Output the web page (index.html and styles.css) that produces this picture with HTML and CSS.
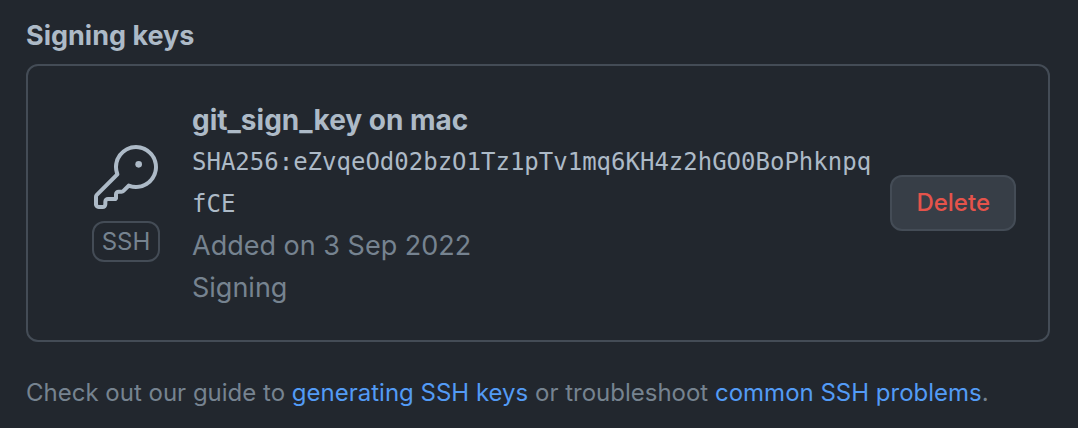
FILE: index.html
```
<!DOCTYPE html>
<html lang="en">
<head>
    <meta charset="UTF-8">
    <meta name="viewport" content="width=device-width, initial-scale=1.0">
    <title>Signing keys</title>
    <link rel="stylesheet" href="styles.css">
</head>
<body>
    <main>
        <h1>Signing keys</h1>

        <ul class="key-list">
            <li class="key">
                <div class="key-type">
                    <svg class="key-icon" viewBox="0 0 24 24" aria-hidden="true">
                        <path d="M16.75 8.5a1.25 1.25 0 100-2.5 1.25 1.25 0 000 2.5z"/>
                        <path fill-rule="evenodd" d="M15.75 0a8.25 8.25 0 00-7.851 10.79L.513 18.178A1.75 1.75 0 000 19.414v2.836C0 23.217.784 24 1.75 24h1.5A1.75 1.75 0 005 22.25v-1a.25.25 0 01.25-.25h2.735a.75.75 0 00.545-.22l.214-.213A.875.875 0 009 19.948V18.5a.25.25 0 01.25-.25h1.086c.464 0 .91-.184 1.237-.513l1.636-1.636A8.25 8.25 0 1015.75 0zM9 8.25a6.75 6.75 0 114.288 6.287.75.75 0 00-.804.168l-1.971 1.972a.25.25 0 01-.177.073H9.25A1.75 1.75 0 007.5 18.5v1H5.25a1.75 1.75 0 00-1.75 1.75v1a.25.25 0 01-.25.25h-1.5a.25.25 0 01-.25-.25v-2.836a.25.25 0 01.073-.177l7.722-7.721a.75.75 0 00.168-.804A6.73 6.73 0 019 8.25z"/>
                    </svg>
                    <span class="label">SSH</span>
                </div>
                <div class="key-info">
                    <strong>git_sign_key on mac</strong>
                    <code>SHA256:eZvqeOd02bzO1Tz1pTv1mq6KH4z2hGO0BoPhknpqfCE</code>
                    <span class="muted">Added on 3 Sep 2022</span>
                    <span class="muted">Signing</span>
                </div>
                <button class="btn" type="button">Delete</button>
            </li>
        </ul>

        <p class="help">Check out our guide to <a href="#">generating SSH keys</a> or troubleshoot <a href="#">common SSH problems</a>.</p>
    </main>
</body>
</html>
```
FILE: styles.css
```
* {
    box-sizing: border-box;
}
body {
    margin: 0;
    background-color: #22272e;
    color: #adbac7;
    font-family: Inter, "Liberation Sans", sans-serif;
    font-size: 27px;
    line-height: 42px;
}
main {
    padding: 15px 28px 0 26px;
}
h1 {
    margin: 0 0 7px;
    font-size: 27px;
    font-weight: 700;
}
.key-list {
    margin: 0;
    padding: 0;
    list-style: none;
    border: 2px solid #444c56;
    border-radius: 12px;
}
.key {
    display: flex;
    align-items: center;
    padding: 31px 32px;
}
.key-type {
    display: flex;
    flex-direction: column;
    align-items: center;
    gap: 12px;
    margin: 0 32px;
}
.key-icon {
    width: 64px;
    height: 64px;
    fill: currentColor;
}
.label {
    width: 68px;
    border: 2px solid #444c56;
    border-radius: 12px;
    color: #768390;
    font-size: 24px;
    line-height: 37px;
    text-align: center;
}
.key-info {
    display: flex;
    flex: 1;
    flex-direction: column;
    min-width: 0;
    padding-top: 2px;
}
.key-info strong {
    font-size: 28px;
    font-weight: 700;
}
.key-info code {
    font-family: "DejaVu Sans Mono", monospace;
    font-size: 24px;
    overflow-wrap: anywhere;
}
.muted {
    color: #768390;
}
.btn {
    margin-left: 16px;
    padding: 0 24px;
    border: 2px solid #444c56;
    border-radius: 12px;
    background-color: #373e47;
    color: #e5534b;
    font-family: inherit;
    font-size: 24px;
    font-weight: 500;
    line-height: 52px;
    cursor: pointer;
}
.btn:hover {
    background-color: #444c56;
}
.help {
    margin: 30px 0 0;
    color: #768390;
    font-size: 24px;
}
.help a {
    color: #539bf5;
    text-decoration: none;
}
.help a:hover {
    text-decoration: underline;
}
```
